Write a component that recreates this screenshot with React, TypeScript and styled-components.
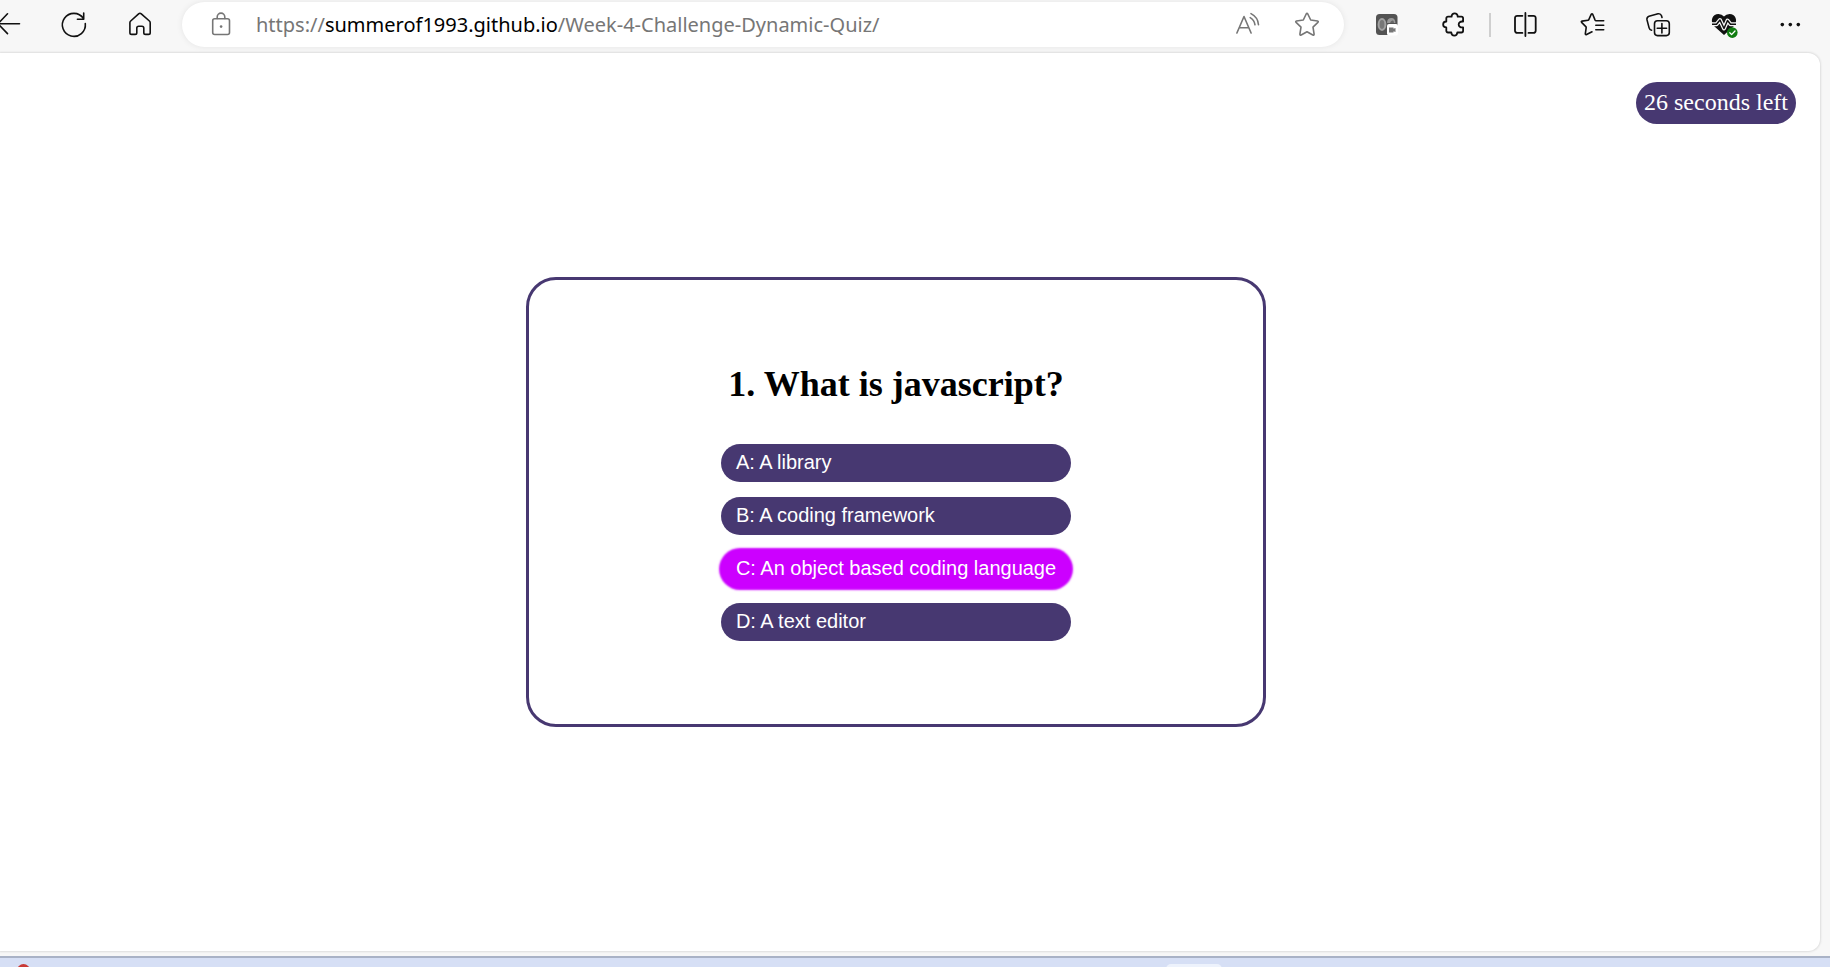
import React, { useState } from "react";
import styled, { createGlobalStyle, css } from "styled-components";

const purple = "#473871";
const serif = '"Liberation Serif", "Times New Roman", serif';
const sans = '"Liberation Sans", Arial, sans-serif';

const GlobalStyle = createGlobalStyle`
  * { box-sizing: border-box; }
  body { margin: 0; background: #f7f7f7; }
`;

const Window = styled.div`
  display: flex;
  flex-direction: column;
  min-height: 100vh;
  overflow: hidden;
`;

const Toolbar = styled.header`
  display: flex;
  align-items: center;
  height: 53px;
  flex: none;
  padding: 2px 7px 6px 0;
  margin-left: -25px;
`;

const ToolButton = styled.button`
  display: flex;
  flex: none;
  align-items: center;
  justify-content: center;
  width: 66px;
  height: 45px;
  padding: 0;
  border: 0;
  background: none;
  color: #111;
`;

const FieldButton = styled(ToolButton)`
  width: 26px;
  color: #767676;
`;

const Divider = styled.span`
  flex: none;
  width: 2px;
  height: 24px;
  margin: 0 2px 0 4px;
  background: #cfcfcf;
`;

const AddressBar = styled.div`
  display: flex;
  flex: 1;
  align-items: center;
  min-width: 0;
  height: 45px;
  margin: 0 9px;
  padding: 0 24px 0 26px;
  border-radius: 23px;
  background: #fff;
  box-shadow: 0 0 6px rgba(0, 0, 0, 0.08);
`;

const Url = styled.div`
  flex: 1;
  min-width: 0;
  margin-left: 22px;
  overflow: hidden;
  white-space: nowrap;
  font: 20px/28px "Noto Sans", "Open Sans", sans-serif;
  color: #767676;
  outline: none;
`;

const Host = styled.span`
  color: #000;
`;

const FieldActions = styled.div`
  display: flex;
  gap: 33px;
`;

const Icon = styled.svg`
  display: block;
  flex: none;
  width: 26px;
  height: 27px;
  overflow: visible;
  fill: none;
  stroke: currentColor;
  stroke-width: 1.6;
  stroke-linecap: round;
  stroke-linejoin: round;
`;

const Page = styled.main`
  display: grid;
  grid-template-rows: 1fr auto 1fr;
  flex: 1;
  margin: 0 10px 5px 0;
  border-radius: 0 12px 12px 0;
  background: #fff;
  box-shadow: 0 0 2px 1px #dedede;
`;

const Timer = styled.div`
  align-self: start;
  justify-self: end;
  margin: 29px 24px 16px 0;
  padding: 7px 8px 9px;
  border-radius: 21px;
  background: ${purple};
  color: #fff;
  font: 24px/26px ${serif};
`;

const Card = styled.section`
  display: flex;
  flex-direction: column;
  align-items: center;
  justify-self: center;
  width: 740px;
  max-width: 100%;
  margin-right: 28px;
  padding: 83px 16px;
  border: 3px solid ${purple};
  border-radius: 30px;
`;

const Question = styled.h1`
  margin: 0 0 39px;
  font: bold 36px/42px ${serif};
  color: #000;
`;

const Answers = styled.div`
  display: flex;
  flex-direction: column;
  gap: 15px;
`;

const Answer = styled.button<{ $active: boolean }>`
  height: 38px;
  padding: 0 15px 2px;
  border: 0;
  border-radius: 19px;
  background: ${purple};
  color: #fff;
  font: 20px/36px ${sans};
  text-align: left;
  ${(p) =>
    p.$active &&
    css`
      background: #c0f;
      box-shadow: 0 0 2px 2px #c0f;
    `}
`;

const Taskbar = styled.footer`
  display: flex;
  justify-content: space-between;
  flex: none;
  height: 11px;
  padding: 6px 608px 0 17px;
  border-top: 2px solid #a9b2c6;
  background: #d6dff5;
  overflow: hidden;
`;

const RedApp = styled.span`
  width: 13px;
  height: 13px;
  border-radius: 50%;
  background: #c93a36;
`;

const ActiveApp = styled.span`
  width: 56px;
  height: 20px;
  border-radius: 5px;
  background: #edf2fc;
`;

const choices = [
  "A: A library",
  "B: A coding framework",
  "C: An object based coding language",
  "D: A text editor",
];

function Glyph({ children }: { children: React.ReactNode }) {
  return (
    <Icon viewBox="0 0 26 27" aria-hidden="true">
      {children}
    </Icon>
  );
}

export default function App() {
  const [active, setActive] = useState(2);
  return (
    <>
      <GlobalStyle />
      <Window>
        <Toolbar>
          <ToolButton aria-label="Back">
            <Glyph><path d="M24.5 12.8H3.5M12.5 2.8L3 12.8L12.5 22.6" /></Glyph>
          </ToolButton>
          <ToolButton aria-label="Refresh">
            <Glyph>
              <path d="M24.3 12.6A11.5 11.5 0 1 1 22.4 7.4M22.7 2V8.3H16.4" />
            </Glyph>
          </ToolButton>
          <ToolButton aria-label="Home">
            <Glyph>
              <path d="M11.6 2.9a2 2 0 0 1 2.7 0L22.4 10a2.4 2.4 0 0 1 .8 1.8v9.9a1.7 1.7 0 0 1-1.7 1.7h-3a1.7 1.7 0 0 1-1.7-1.7v-4.6a1.9 1.9 0 0 0-1.9-1.9h-3.2a1.9 1.9 0 0 0-1.9 1.9v4.6a1.7 1.7 0 0 1-1.7 1.7H4.6a1.7 1.7 0 0 1-1.7-1.7v-9.9a2.4 2.4 0 0 1 .8-1.8z" />
            </Glyph>
          </ToolButton>
          <AddressBar>
            <FieldButton aria-label="View site information">
              <Glyph>
                <rect x="4.7" y="7.8" width="16.8" height="15.7" rx="2" />
                <path d="M9.2 7.5V5.9a3.8 3.8 0 0 1 7.6 0v1.6" />
                <circle cx="13.1" cy="15.6" r="1.3" fill="currentColor" stroke="none" />
              </Glyph>
            </FieldButton>
            <Url role="textbox" aria-label="Address" contentEditable suppressContentEditableWarning spellCheck={false}>
              https://<Host>summerof1993.github.io</Host>/Week-4-Challenge-Dynamic-Quiz/
            </Url>
            <FieldActions>
              <FieldButton aria-label="Read aloud">
                <Glyph>
                  <path d="M1.9 22L9 5.5L16.1 22M4.3 16.7H13.7M15.2 6.6Q19.3 9 20 13.8M16 2.6Q23 6.2 23.5 13.8" />
                </Glyph>
              </FieldButton>
              <FieldButton aria-label="Add to favorites">
                <Glyph>
                  <path d="M12.2 3q.8-1.2 1.6 0L16.7 9l6.8 1q1.3.4.4 1.4L19 16.1l1.1 7q-.1 1.3-1.3.9L13 20.8 7.2 24q-1.2.4-1.3-.9l1.1-7-4.9-4.7q-.9-1 .4-1.4l6.8-1z" />
                </Glyph>
              </FieldButton>
            </FieldActions>
          </AddressBar>
          <ToolButton aria-label="Recorder extension">
            <Glyph>
              <g stroke="none">
                <rect x="3" y="3" width="21.5" height="21" rx="3.5" fill="#535353" />
                <ellipse cx="9" cy="13.5" rx="3.4" ry="5.4" fill="#777" stroke="#a2a2a2" strokeWidth="2" />
                <path d="M14 12q0-5 4.5-5 3.6 0 4 5z" fill="#999" />
                <path d="M17 12q1-3 3-2.5 1 .5 1 2.5z" fill="#666" />
                <rect x="14" y="13" width="11" height="11.5" rx="2" fill="#fff" />
                <path d="M16 16.5h4.5v1.3l2-.8v4l-2-.8v1.3H16z" fill="#777" />
              </g>
            </Glyph>
          </ToolButton>
          <ToolButton aria-label="Extensions">
            <Glyph>
              <path strokeWidth="1.8" d="M12.6 5.7C12.3 1.3 19 1.3 18.7 5.7H22.4a1.7 1.7 0 0 1 1.7 1.7v3.2C18.2 9.6 18.2 17.2 24.1 16.4v3.4a1.7 1.7 0 0 1-1.7 1.7H18.3C18 25.6 12.6 25.6 12.3 21.5H9a1.7 1.7 0 0 1-1.7-1.7V16.4C3.1 16.4 3.1 10.7 7.3 10.5V7.4A1.7 1.7 0 0 1 9 5.7z" />
            </Glyph>
          </ToolButton>
          <Divider />
          <ToolButton aria-label="Split screen">
            <Glyph>
              <path strokeWidth="1.8" d="M12.4 2v23M9.4 4.8H4.2a2.2 2.2 0 0 0-2.2 2.2v12.7a2.2 2.2 0 0 0 2.2 2.2h5.2M15.5 4.8h5a2.2 2.2 0 0 1 2.2 2.2v12.7a2.2 2.2 0 0 1-2.2 2.2h-5" />
            </Glyph>
          </ToolButton>
          <ToolButton aria-label="Favorites">
            <Glyph>
              <path d="M24.7 9.7H17q-.6 0-.9-.6L13.7 3.2q-.7-1-1.4 0L9.8 8.6q-.2.5-.8.6l-6 .9q-1.1.3-.4 1.3l4.2 4.2q.5.5.4 1l-.9 6.2q.1 1.3 1.3.7L13 20.8M16.8 14.2h7.9M16.8 18.8h7.9" />
            </Glyph>
          </ToolButton>
          <ToolButton aria-label="Collections">
            <Glyph>
              <rect x="9.5" y="9.8" width="14.8" height="14.8" rx="3" />
              <path d="M16.9 12.5v9.4M12.2 17.2h9.4M6.6 19.2C5 18.9 4.4 18.1 4.1 16.9L2 8.9Q1.5 6.1 4 5.3L13 2.8q2.6-.5 3.5 1.9l.5 1.8" />
            </Glyph>
          </ToolButton>
          <ToolButton aria-label="Browser essentials">
            <Glyph>
              <path fill="currentColor" stroke="none" d="M13 24L3.5 15.5C-2 9.5 2 3 7.4 3Q11 3 13 5.6Q15 3 18.6 3C24 3 28 9.5 22.5 15.5z" />
              <path stroke="#f7f7f7" strokeWidth="4" strokeLinecap="butt" d="M0 13.3H5.5L9 9L13 17.5L16.5 9.5L19.5 13.3H26" />
              <path strokeWidth="1.5" strokeLinecap="butt" d="M1 13.3H5.5L9 9L13 17.5L16.5 9.5L19.5 13.3H25" />
              <circle cx="21.3" cy="21.6" r="5.3" fill="#107c10" stroke="none" />
              <path stroke="#fff" strokeWidth="1.3" d="M18.8 21.8l1.8 1.8 3.4-3.6" />
            </Glyph>
          </ToolButton>
          <ToolButton aria-label="Settings and more">
            <Glyph>
              <g fill="currentColor" stroke="none">
                <circle cx="5.3" cy="13.6" r="1.8" />
                <circle cx="13.3" cy="13.6" r="1.8" />
                <circle cx="21.3" cy="13.6" r="1.8" />
              </g>
            </Glyph>
          </ToolButton>
        </Toolbar>
        <Page>
          <Timer role="timer">26 seconds left</Timer>
          <Card>
            <Question>1. What is javascript?</Question>
            <Answers>
              {choices.map((choice, i) => (
                <Answer key={choice} $active={i === active} onMouseEnter={() => setActive(i)}>
                  {choice}
                </Answer>
              ))}
            </Answers>
          </Card>
        </Page>
        <Taskbar>
          <RedApp />
          <ActiveApp />
        </Taskbar>
      </Window>
    </>
  );
}
